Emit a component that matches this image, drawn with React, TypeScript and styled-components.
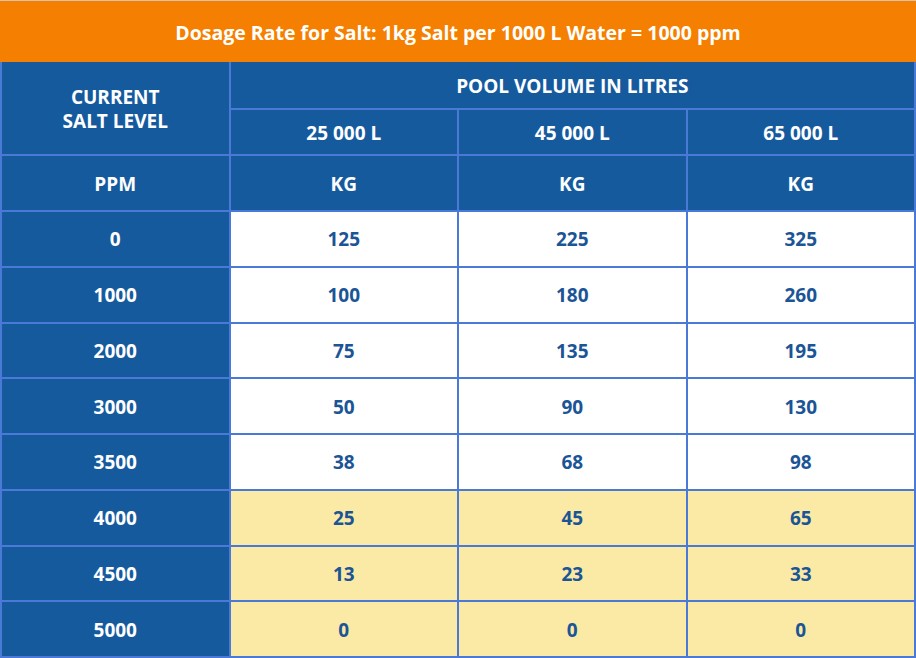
import styled, { createGlobalStyle } from 'styled-components'

const GlobalStyle = createGlobalStyle`
  html, body {
    margin: 0;
    padding: 0;
    background: #ffffff;
  }
  body {
    font-family: "Open Sans", "Liberation Sans", sans-serif;
  }
`

const Page = styled.div`
  width: 916px;
  height: 658px;
  display: flex;
  flex-direction: column;
`

const TitleBar = styled.div`
  height: 62px;
  border-top: 1px solid #d9c4a8;
  background: #f57f00;
  color: #ffffff;
  font-weight: 700;
  font-size: 19.5px;
  padding-top: 1px;
  box-sizing: border-box;
  display: flex;
  align-items: center;
  justify-content: center;
`

const Grid = styled.div`
  flex: 1;
  display: grid;
  grid-template-columns: repeat(4, 1fr);
  grid-template-rows: 46px 44px 54px repeat(8, 1fr);
  gap: 2px;
  padding: 0 2px 2px 2px;
  background: #4b79d8;
`

const Cell = styled.div<{ $tone?: 'head' | 'plain' | 'warn'; $col?: string; $row?: string }>`
  display: flex;
  align-items: center;
  justify-content: center;
  text-align: center;
  font-weight: 700;
  font-size: 19px;
  line-height: 24px;
  padding-top: 1px;
  grid-column: ${(p) => p.$col ?? 'auto'};
  grid-row: ${(p) => p.$row ?? 'auto'};
  background: ${(p) =>
    p.$tone === 'warn' ? '#fbeaa5' : p.$tone === 'plain' ? '#ffffff' : '#165a9e'};
  color: ${(p) => (p.$tone === 'head' || !p.$tone ? '#ffffff' : '#1b5596')};
`

const rows: [string, number[]][] = [
  ['0', [125, 225, 325]],
  ['1000', [100, 180, 260]],
  ['2000', [75, 135, 195]],
  ['3000', [50, 90, 130]],
  ['3500', [38, 68, 98]],
  ['4000', [25, 45, 65]],
  ['4500', [13, 23, 33]],
  ['5000', [0, 0, 0]],
]

export default function App() {
  return (
    <Page>
      <GlobalStyle />
      <TitleBar>Dosage Rate for Salt: 1kg Salt per 1000 L Water = 1000 ppm</TitleBar>
      <Grid>
        <Cell $tone="head" $row="1 / 3" $col="1">
          CURRENT
          <br />
          SALT LEVEL
        </Cell>
        <Cell $tone="head" $col="2 / 5">POOL VOLUME IN LITRES</Cell>
        <Cell $tone="head">25 000 L</Cell>
        <Cell $tone="head">45 000 L</Cell>
        <Cell $tone="head">65 000 L</Cell>
        <Cell $tone="head">PPM</Cell>
        <Cell $tone="head">KG</Cell>
        <Cell $tone="head">KG</Cell>
        <Cell $tone="head">KG</Cell>
        {rows.map(([ppm, vals]) => {
          const tone = Number(ppm) >= 4000 ? 'warn' : 'plain'
          return [
            <Cell key={ppm} $tone="head">{ppm}</Cell>,
            ...vals.map((v, i) => (
              <Cell key={ppm + '-' + i} $tone={tone}>{v}</Cell>
            )),
          ]
        })}
      </Grid>
    </Page>
  )
}
